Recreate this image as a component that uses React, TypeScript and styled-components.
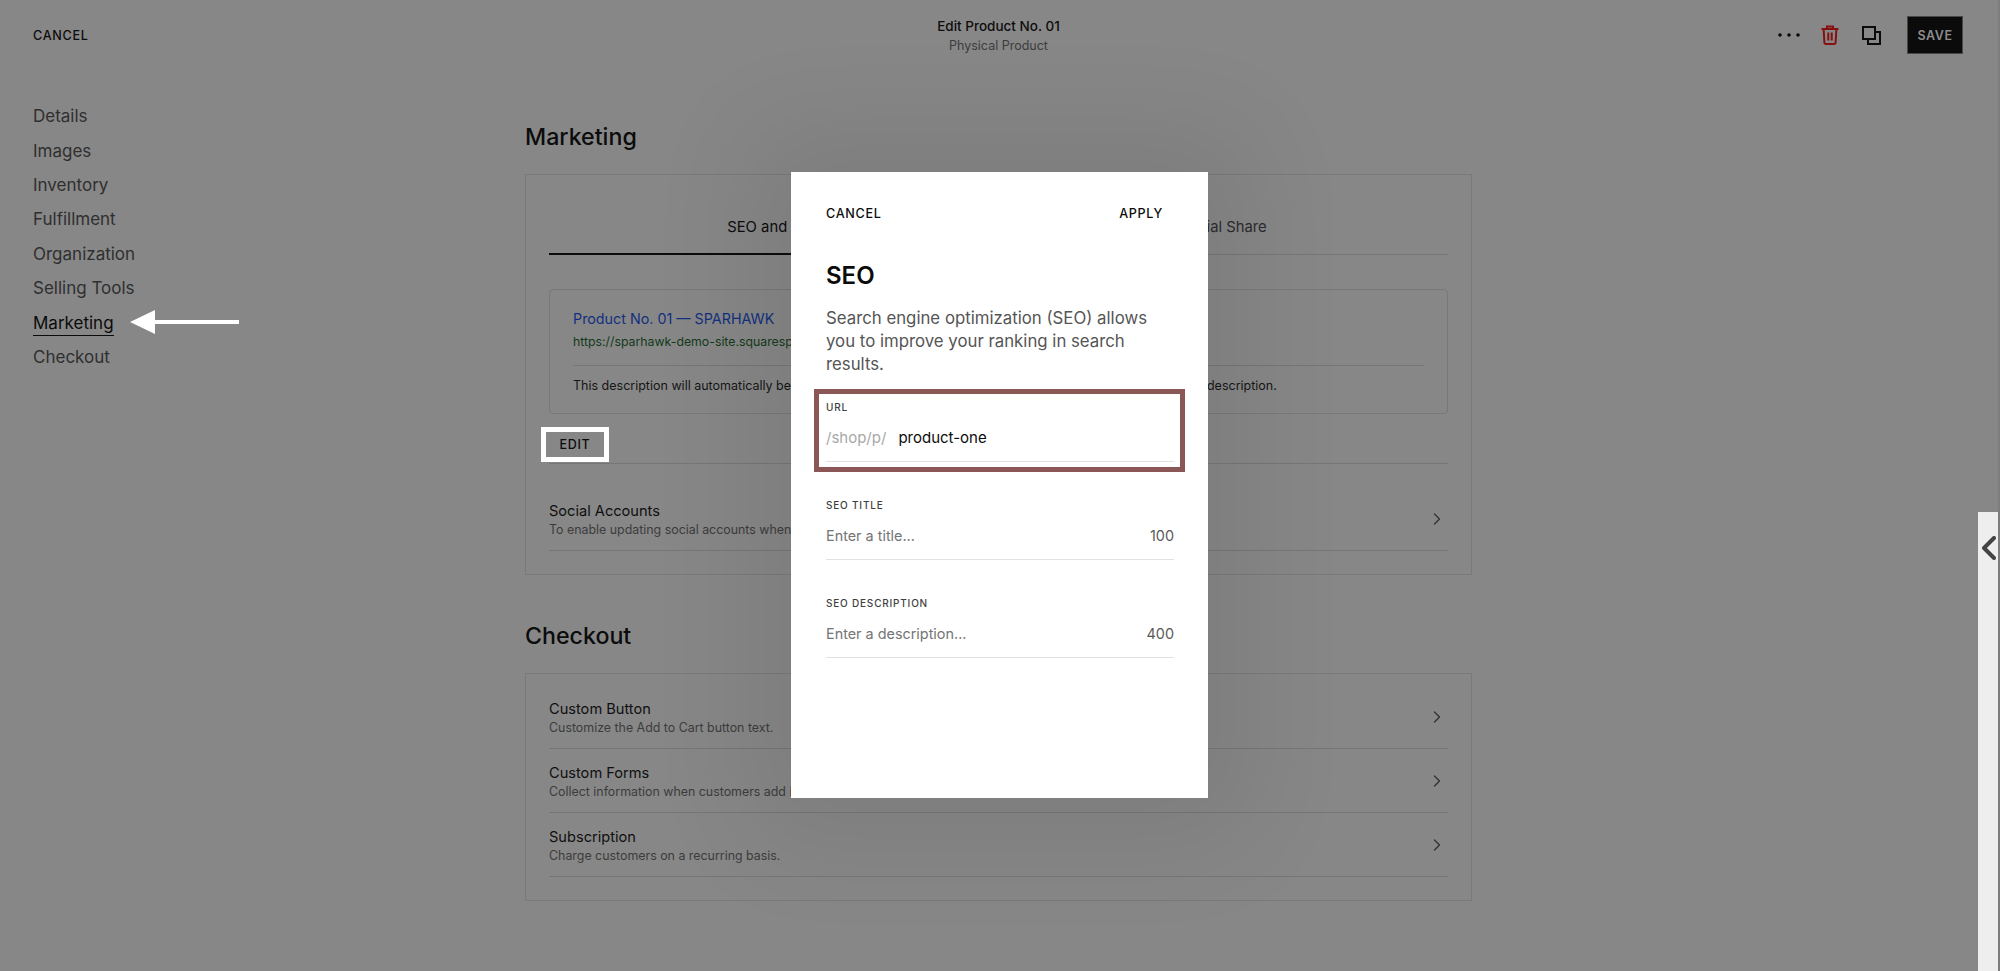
import React from 'react'
import styled, { createGlobalStyle } from 'styled-components'
import { ChevronRight } from 'lucide-react'

const GlobalStyle = createGlobalStyle`
  html, body {
    margin: 0;
    height: 100%;
    overflow: hidden;
    background: #878787;
  }
  * { box-sizing: border-box; }
  body {
    font-family: Inter, "Liberation Sans", sans-serif;
    color: #111;
  }
`

const Page = styled.div`
  position: relative;
  width: 2000px;
  height: 971px;
  overflow: hidden;
  background: #878787;
  border-right: 2px solid #7d7d7d;
`

const TopBar = styled.header`
  height: 70px;
  padding: 2px 35px 0 33px;
  display: grid;
  grid-template-columns: 1fr auto 1fr;
  align-items: center;
`

const TextAction = styled.span`
  font-size: 12.6px;
  font-weight: 450;
  letter-spacing: 0.7px;
  color: #0c0c0c;
  line-height: 20px;
`

const TitleBlock = styled.div`
  text-align: center;
  margin-right: -1px;
`

const PageTitle = styled.div`
  font-size: 13.5px;
  font-weight: 500;
  line-height: 20px;
  color: #0d0d0d;
`

const PageSubtitle = styled.div`
  font-size: 12.5px;
  line-height: 20px;
  color: #3d3d3d;
`

const Actions = styled.div`
  justify-self: end;
  display: flex;
  align-items: center;
  margin-top: -2px;
`

const IconSlot = styled.svg<{ $mr: number }>`
  display: block;
  margin-right: ${p => p.$mr}px;
`

const SaveButton = styled.div`
  width: 56px;
  height: 38px;
  display: flex;
  align-items: center;
  justify-content: center;
  background: #0b0b0b;
  border: 1px solid #484848;
  color: #8c8c8c;
  font-size: 12.5px;
  font-weight: 600;
  letter-spacing: 0.6px;
`

const Body = styled.div`
  display: grid;
  grid-template-columns: 525px 947px;
`

const Nav = styled.nav`
  padding: 28.5px 0 0 33px;
`

const NavRow = styled.div`
  height: 34.4px;
  display: flex;
  align-items: center;
`

const NavLabel = styled.span<{ $active?: boolean }>`
  font-size: 17px;
  line-height: 22px;
  color: ${p => (p.$active ? '#0b0b0b' : '#2f2f2f')};
  border-bottom: ${p => (p.$active ? '1px solid #0b0b0b' : '1px solid transparent')};
  padding-bottom: 1px;
  margin-top: 3px;
`

const Arrow = styled.svg`
  display: block;
  margin-left: 16px;
`

const Main = styled.main``

const SectionTitle = styled.h2<{ $mt: number }>`
  margin: ${p => p.$mt}px 0 22px;
  font-size: 23.2px;
  font-weight: 500;
  line-height: 30px;
  color: #0c0c0c;
`

const Panel = styled.section`
  border: 1px solid #7a7a7a;
  padding: 0 23px 23px;
`

const Tabs = styled.div`
  display: grid;
  grid-template-columns: 1fr 1fr;
  height: 80px;
  border-bottom: 1px solid #767676;
`

const Tab = styled.div<{ $active?: boolean }>`
  padding-top: 42px;
  text-align: center;
  font-size: 14.8px;
  line-height: 20px;
  color: ${p => (p.$active ? '#0c0c0c' : '#2c2c2c')};
  height: 80px;
  border-bottom: ${p => (p.$active ? '2px solid #0c0c0c' : 'none')};
`

const PreviewCard = styled.div`
  margin-top: 34px;
  border: 1px solid #787878;
  border-radius: 4px;
  padding: 19px 23px 17px;
`

const PreviewTitle = styled.div`
  font-size: 14.3px;
  line-height: 20px;
  color: #13307f;
`

const PreviewUrl = styled.div`
  margin-top: 3px;
  font-size: 12.3px;
  line-height: 20px;
  color: #123a1a;
  white-space: nowrap;
`

const Rule = styled.div<{ $mt: number }>`
  margin-top: ${p => p.$mt}px;
  height: 1px;
  background: #767676;
`

const PreviewNote = styled.div`
  margin-top: 10px;
  font-size: 12.5px;
  line-height: 20px;
  color: #161616;
  white-space: nowrap;
`

const EditButton = styled.div`
  margin: 13px 0 0 -8px;
  width: 68px;
  height: 35px;
  border: 5px solid #ffffff;
  display: flex;
  align-items: center;
  justify-content: center;
  font-size: 12.5px;
  font-weight: 450;
  letter-spacing: 0.7px;
  color: #0c0c0c;
`

const Row = styled.div<{ $pt: number }>`
  padding: ${p => p.$pt}px 0 10px;
  border-bottom: 1px solid #767676;
  display: flex;
  align-items: center;
  justify-content: space-between;
`

const RowTitle = styled.div`
  font-size: 14.6px;
  line-height: 20px;
  margin-top: 1px;
  margin-bottom: -1px;
  color: #0f0f0f;
`

const RowSub = styled.div`
  font-size: 12.4px;
  line-height: 20px;
  color: #3c3c3c;
`

const RowChevron = styled(ChevronRight)`
  display: block;
  color: #333;
  margin: -3px 1px 0 0;
`

const Modal = styled.div`
  position: absolute;
  left: 791px;
  top: 172px;
  width: 417px;
  height: 626px;
  background: #fff;
  padding: 32px 34px 0 35px;
  box-shadow: 0 0 100px 40px rgba(0, 0, 0, 0.08);
`

const ModalActions = styled.div`
  display: flex;
  justify-content: space-between;
  padding-right: 11px;
`

const ModalTitle = styled.h3`
  margin: 36px 0 0;
  font-size: 24px;
  font-weight: 600;
  line-height: 32px;
  color: #0b0b0b;
`

const ModalText = styled.p`
  margin: 15px 0 0;
  max-width: 330px;
  font-size: 16.8px;
  line-height: 23px;
  color: #555;
`

const HighlightBox = styled.div`
  margin: 13px -11px 0 -12px;
  height: 83px;
  border: 5px solid #8a5656;
  padding: 3px 6px 0 7px;
`

const Field = styled.div<{ $mt?: number }>`
  margin-top: ${p => p.$mt ?? 0}px;
`

const FieldLabel = styled.div`
  font-size: 10px;
  font-weight: 500;
  line-height: 20px;
  letter-spacing: 0.8px;
  color: #3f3f3f;
`

const FieldInput = styled.div`
  margin-top: 10px;
  height: 35px;
  padding-bottom: 13px;
  display: flex;
  align-items: center;
  border-bottom: 1px solid #e2e2e2;
  font-size: 15px;
  line-height: 20px;
`

const Prefix = styled.span`
  color: #a8a8a8;
  margin-right: 12px;
`

const Value = styled.span`
  color: #0c0c0c;
`

const Placeholder = styled.span`
  color: #757575;
  font-size: 14.4px;
`

const Counter = styled.span`
  margin-left: auto;
  color: #5a5a5a;
  font-size: 14.4px;
`

const SideTab = styled.div`
  position: absolute;
  right: -2px;
  top: 512px;
  width: 22px;
  height: 459px;
  background: #eeeeee;
  padding: 24px 0 0 4px;
`

const seoFields = [
  { label: 'SEO TITLE', placeholder: 'Enter a title...', count: 100, mt: 23 },
  { label: 'SEO DESCRIPTION', placeholder: 'Enter a description...', count: 400, mt: 33 },
]

const navItems = ['Details', 'Images', 'Inventory', 'Fulfillment', 'Organization', 'Selling Tools', 'Marketing', 'Checkout']

const checkoutRows = [
  { title: 'Custom Button', sub: 'Customize the Add to Cart button text.', pt: 24 },
  { title: 'Custom Forms', sub: 'Collect information when customers add items to cart.', pt: 13 },
  { title: 'Subscription', sub: 'Charge customers on a recurring basis.', pt: 13 },
]

export default function App() {
  return (
    <Page>
      <GlobalStyle />
      <TopBar>
        <TextAction>CANCEL</TextAction>
        <TitleBlock>
          <PageTitle>Edit Product No. 01</PageTitle>
          <PageSubtitle>Physical Product</PageSubtitle>
        </TitleBlock>
        <Actions>
          <IconSlot $mr={21} width="22" height="6" viewBox="0 0 22 6">
            <circle cx="2" cy="3" r="1.8" fill="#0b0b0b" />
            <circle cx="11" cy="3" r="1.8" fill="#0b0b0b" />
            <circle cx="20" cy="3" r="1.8" fill="#0b0b0b" />
          </IconSlot>
          <IconSlot $mr={23} width="18" height="20" viewBox="0 0 18 20" fill="none" stroke="#85100f" strokeWidth="2">
            <path d="M0.5 4h17M6 4V1.5h6V4M2.6 4l.8 13.5a1.5 1.5 0 0 0 1.5 1.5h8.2a1.5 1.5 0 0 0 1.5-1.5L15.4 4M7.3 7.5v8M10.7 7.5v8" />
          </IconSlot>
          <IconSlot $mr={26} width="19" height="19" viewBox="0 0 19 19" fill="none" stroke="#0b0b0b" strokeWidth="2">
            <rect x="1" y="1" width="12" height="12" />
            <path d="M13 6h5v12H6v-5" />
          </IconSlot>
          <SaveButton>SAVE</SaveButton>
        </Actions>
      </TopBar>

      <Body>
        <Nav>
          {navItems.map(item => (
            <NavRow key={item}>
              <NavLabel $active={item === 'Marketing'}>{item}</NavLabel>
              {item === 'Marketing' && (
                <Arrow width="109" height="24" viewBox="0 0 109 24">
                  <path d="M0 12 L25 0 V10 H109 V14 H25 V24 Z" fill="#fff" />
                </Arrow>
              )}
            </NavRow>
          ))}
        </Nav>

        <Main>
          <SectionTitle $mt={52}>Marketing</SectionTitle>
          <Panel>
            <Tabs>
              <Tab $active>SEO and URL</Tab>
              <Tab>Social Share</Tab>
            </Tabs>
            <PreviewCard>
              <PreviewTitle>Product No. 01 — SPARHAWK</PreviewTitle>
              <PreviewUrl>https://sparhawk-demo-site.squarespace.com/shop/p/product-one</PreviewUrl>
              <Rule $mt={13} />
              <PreviewNote>This description will automatically be pulled from your product's excerpt or in your main website's SEO site description.</PreviewNote>
            </PreviewCard>
            <EditButton>EDIT</EditButton>
            <Rule $mt={1} />
            <Row $pt={36}>
              <div>
                <RowTitle>Social Accounts</RowTitle>
                <RowSub>To enable updating social accounts when publishing, connect an account.</RowSub>
              </div>
              <RowChevron size={20} strokeWidth={1.6} />
            </Row>
          </Panel>

          <SectionTitle $mt={46}>Checkout</SectionTitle>
          <Panel>
            {checkoutRows.map(row => (
              <Row key={row.title} $pt={row.pt}>
                <div>
                  <RowTitle>{row.title}</RowTitle>
                  <RowSub>{row.sub}</RowSub>
                </div>
                <RowChevron size={20} strokeWidth={1.6} />
              </Row>
            ))}
          </Panel>
        </Main>
      </Body>

      <Modal>
        <ModalActions>
          <TextAction>CANCEL</TextAction>
          <TextAction>APPLY</TextAction>
        </ModalActions>
        <ModalTitle>SEO</ModalTitle>
        <ModalText>
          Search engine optimization (SEO) allows you to improve your ranking in search results.
        </ModalText>
        <HighlightBox>
          <FieldLabel>URL</FieldLabel>
          <FieldInput>
            <Prefix>/shop/p/</Prefix>
            <Value>product-one</Value>
          </FieldInput>
        </HighlightBox>
        {seoFields.map(field => (
          <Field key={field.label} $mt={field.mt}>
            <FieldLabel>{field.label}</FieldLabel>
            <FieldInput>
              <Placeholder>{field.placeholder}</Placeholder>
              <Counter>{field.count}</Counter>
            </FieldInput>
          </Field>
        ))}
      </Modal>

      <SideTab>
        <svg width="14" height="24" viewBox="0 0 14 24" fill="none" stroke="#444" strokeWidth="4" strokeLinecap="round" strokeLinejoin="round">
          <path d="M12 2 L2 12 L12 22" />
        </svg>
      </SideTab>
    </Page>
  )
}
